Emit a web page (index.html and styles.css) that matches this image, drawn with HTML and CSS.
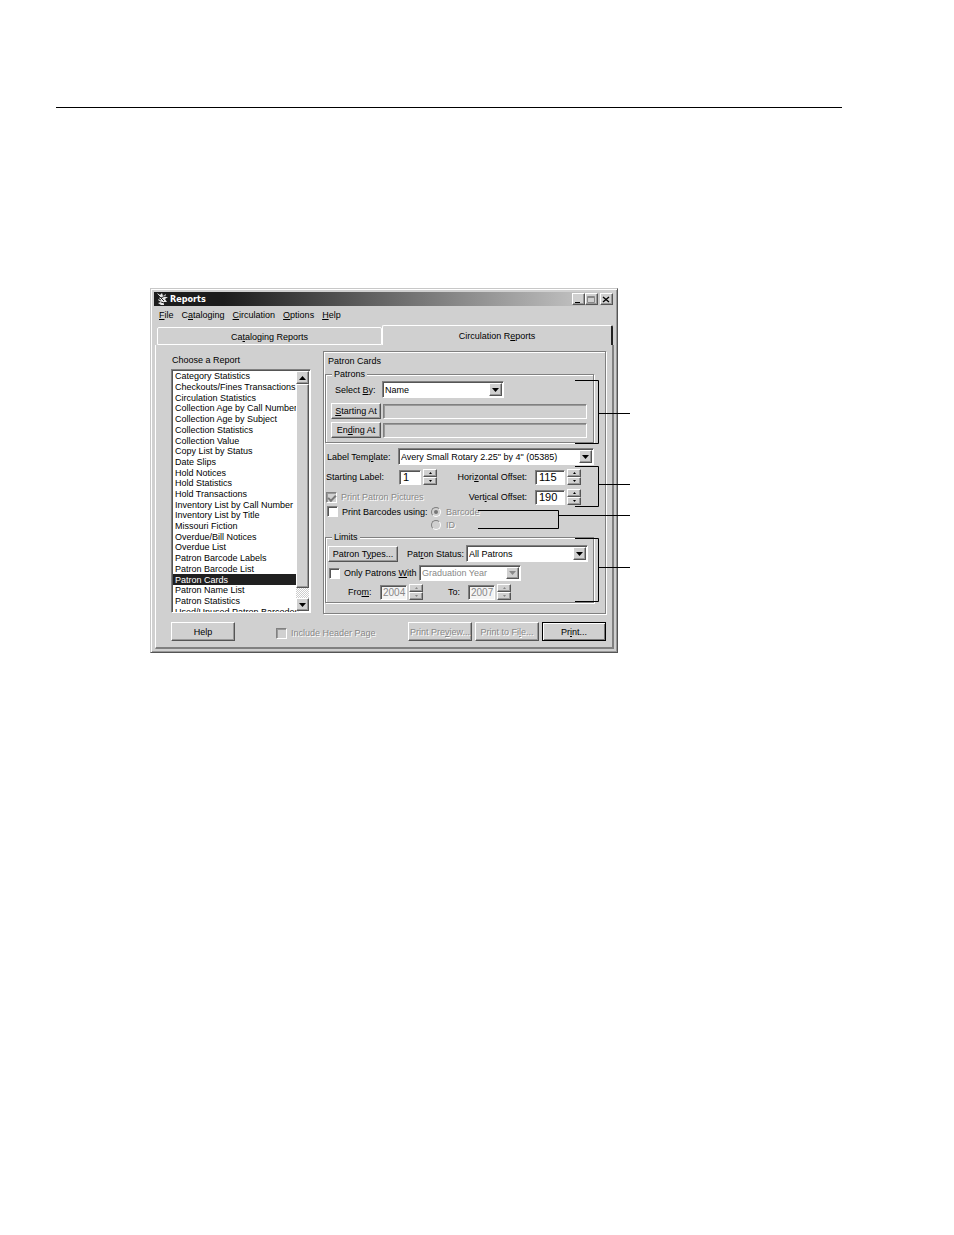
FILE: index.html
```html
<!DOCTYPE html>
<html lang="en">
<head>
<meta charset="utf-8">
<title>Reports</title>
<link rel="stylesheet" href="styles.css">
</head>
<body>
<hr class="rule">
<main class="figure">
<form class="window">
  <header class="titlebar">
    <svg class="logo" viewBox="0 0 12 14" aria-hidden="true"><path d="M1 1l3 2 2-2 1 3 3-2-1 3 3 0-3 2 2 3-3 0v3H5L2 11l3-1-3-2 2-2z" fill="#e8e8e8"/><path d="M1 2l7 7M9 4L5 6M5 10l3 1M3 7l2 1" stroke="#222" fill="none"/></svg>
    <h1 class="title">Reports</h1>
    <button type="button" class="winbtn" aria-label="Minimize"><svg viewBox="0 0 10 9"><path d="M2 7.500h5" stroke="#000"/></svg></button>
    <button type="button" class="winbtn" aria-label="Maximize" disabled><svg viewBox="0 0 10 9"><path d="M1.500 1.500h7v6h-7zM1 2.500h8" stroke="#888" fill="none"/></svg></button>
    <button type="button" class="winbtn close" aria-label="Close"><svg viewBox="0 0 10 9"><path d="M2 2l6 5M8 2L2 7" stroke="#000" stroke-width="1.300"/></svg></button>
  </header>
  <nav class="menu">
    <a href="#file"><u>F</u>ile</a><a href="#cataloging">C<u>a</u>taloging</a><a href="#circulation"><u>C</u>irculation</a><a href="#options"><u>O</u>ptions</a><a href="#help"><u>H</u>elp</a>
  </nav>
  <div class="tabs" role="tablist">
    <button type="button" class="tab" role="tab">Ca<u>t</u>aloging Reports</button>
    <button type="button" class="tab active" role="tab" aria-selected="true">Circulation R<u>e</u>ports</button>
  </div>
  <div class="page">
    <div class="columns">
      <section class="chooser">
        <h2 class="caption" id="choose">Choose a Report</h2>
        <div class="list">
          <div class="items" role="radiogroup" aria-labelledby="choose">
            <label><input type="radio" name="report">Category Statistics</label>
            <label><input type="radio" name="report">Checkouts/Fines Transactions</label>
            <label><input type="radio" name="report">Circulation Statistics</label>
            <label><input type="radio" name="report">Collection Age by Call Number</label>
            <label><input type="radio" name="report">Collection Age by Subject</label>
            <label><input type="radio" name="report">Collection Statistics</label>
            <label><input type="radio" name="report">Collection Value</label>
            <label><input type="radio" name="report">Copy List by Status</label>
            <label><input type="radio" name="report">Date Slips</label>
            <label><input type="radio" name="report">Hold Notices</label>
            <label><input type="radio" name="report">Hold Statistics</label>
            <label><input type="radio" name="report">Hold Transactions</label>
            <label><input type="radio" name="report">Inventory List by Call Number</label>
            <label><input type="radio" name="report">Inventory List by Title</label>
            <label><input type="radio" name="report">Missouri Fiction</label>
            <label><input type="radio" name="report">Overdue/Bill Notices</label>
            <label><input type="radio" name="report">Overdue List</label>
            <label><input type="radio" name="report">Patron Barcode Labels</label>
            <label><input type="radio" name="report">Patron Barcode List</label>
            <label><input type="radio" name="report" checked>Patron Cards</label>
            <label><input type="radio" name="report">Patron Name List</label>
            <label><input type="radio" name="report">Patron Statistics</label>
            <label><input type="radio" name="report">Used/Unused Patron Barcodes</label>
          </div>
          <div class="scroll">
            <button type="button" class="scrollbtn" aria-label="Scroll up"><svg viewBox="0 0 7 4"><path d="M0 4h7L3.500 0z"/></svg></button>
            <div class="thumb"></div>
            <div class="track"></div>
            <button type="button" class="scrollbtn" aria-label="Scroll down"><svg viewBox="0 0 7 4"><path d="M0 0h7L3.500 4z"/></svg></button>
          </div>
        </div>
      </section>
      <section class="panel">
        <h2 class="panel-title">Patron Cards</h2>
        <fieldset class="group">
          <legend>Patrons</legend>
          <div class="row select-by">
            <label for="by">Select <u>B</u>y:</label>
            <div class="combo medium"><select id="by"><option>Name</option></select><span class="arrow"><svg viewBox="0 0 7 4"><path d="M0 0h7L3.500 4z"/></svg></span></div>
          </div>
          <div class="row range"><button type="button" class="btn"><u>S</u>tarting At</button><input class="readout" aria-label="Starting at" readonly></div>
          <div class="row range"><button type="button" class="btn">En<u>d</u>ing At</button><input class="readout" aria-label="Ending at" readonly></div>
        </fieldset>
        <div class="row template">
          <label for="tpl">Label Tem<u>p</u>late:</label>
          <div class="combo"><select id="tpl"><option>Avery Small Rotary 2.25" by 4" (05385)</option></select><span class="arrow"><svg viewBox="0 0 7 4"><path d="M0 0h7L3.500 4z"/></svg></span></div>
        </div>
        <div class="row offsets">
          <label for="sl">Starting Label:</label>
          <input id="sl" class="num short" value="1">
          <span class="spin"><button type="button" aria-label="Up"><svg viewBox="0 0 3 2"><path d="M0 2h3L1.500 0z"/></svg></button><button type="button" aria-label="Down"><svg viewBox="0 0 3 2"><path d="M0 0h3L1.500 2z"/></svg></button></span>
          <label for="ho" class="right">Hori<u>z</u>ontal Offset:</label>
          <input id="ho" class="num" value="115">
          <span class="spin"><button type="button" aria-label="Up"><svg viewBox="0 0 3 2"><path d="M0 2h3L1.500 0z"/></svg></button><button type="button" aria-label="Down"><svg viewBox="0 0 3 2"><path d="M0 0h3L1.500 2z"/></svg></button></span>
        </div>
        <div class="row offsets second">
          <label class="check off"><input type="checkbox" checked disabled>Print Patron Pictures</label>
          <label for="vo" class="right">Vert<u>i</u>cal Offset:</label>
          <input id="vo" class="num" value="190">
          <span class="spin"><button type="button" aria-label="Up"><svg viewBox="0 0 3 2"><path d="M0 2h3L1.500 0z"/></svg></button><button type="button" aria-label="Down"><svg viewBox="0 0 3 2"><path d="M0 0h3L1.500 2z"/></svg></button></span>
        </div>
        <div class="barcodes">
          <label class="check"><input type="checkbox">Print Barcodes using:</label>
          <div class="radios">
            <label class="radio off"><input type="radio" name="code" checked disabled>Barcode</label>
            <label class="radio off"><input type="radio" name="code" disabled>ID</label>
          </div>
        </div>
        <fieldset class="group limits">
          <legend>Limits</legend>
          <div class="row status">
            <button type="button" class="btn">Patron T<u>y</u>pes...</button>
            <label for="ps">Pat<u>r</u>on Status:</label>
            <div class="combo medium"><select id="ps"><option>All Patrons</option></select><span class="arrow"><svg viewBox="0 0 7 4"><path d="M0 0h7L3.500 4z"/></svg></span></div>
          </div>
          <div class="row only">
            <label class="check"><input type="checkbox"><span>Only Patrons <u>W</u>ith</span></label>
            <div class="combo off"><select aria-label="Criterion" disabled><option>Graduation Year</option></select><span class="arrow"><svg viewBox="0 0 7 4"><path d="M0 0h7L3.500 4z"/></svg></span></div>
          </div>
          <div class="row years">
            <label for="from">Fro<u>m</u>:</label>
            <input id="from" class="num" value="2004" disabled>
            <span class="spin off"><button type="button" aria-label="Up" disabled><svg viewBox="0 0 3 2"><path d="M0 2h3L1.500 0z"/></svg></button><button type="button" aria-label="Down" disabled><svg viewBox="0 0 3 2"><path d="M0 0h3L1.500 2z"/></svg></button></span>
            <label for="to" class="to">To:</label>
            <input id="to" class="num" value="2007" disabled>
            <span class="spin off"><button type="button" aria-label="Up" disabled><svg viewBox="0 0 3 2"><path d="M0 2h3L1.500 0z"/></svg></button><button type="button" aria-label="Down" disabled><svg viewBox="0 0 3 2"><path d="M0 0h3L1.500 2z"/></svg></button></span>
          </div>
        </fieldset>
      </section>
    </div>
    <footer class="actions">
      <button type="button" class="btn">Help</button>
      <label class="check off header-check"><input type="checkbox" disabled>Include Header Page</label>
      <button type="button" class="btn" disabled>Print Pre<u>v</u>iew...</button>
      <button type="button" class="btn" disabled>Print to Fi<u>l</u>e...</button>
      <button type="button" class="btn default">Pr<u>i</u>nt...</button>
    </footer>
  </div>
</form>
<svg class="callouts" viewBox="0 0 480 365" aria-hidden="true"><path d="M425 92.500h23.500v63H425M448.500 125.500H480M425 178.500h23.500v40H425M448.500 196.500H480M328 222.500h80.500v18H328M408.500 227.500H480M425 250.500h23.500v63H425M448.500 279.500H480" fill="none" stroke="#000"/></svg>
</main>
</body>
</html>
```
FILE: styles.css
```css
* { box-sizing: border-box; }
body {
  margin: 0;
  background: #fff;
  color: #000;
  font: 9px/12px "Liberation Sans", Arial, sans-serif;
}
button, input, select { font: inherit; color: inherit; margin: 0; padding: 0; border-radius: 0; }
button svg, .arrow svg { display: block; }
h1, h2 { margin: 0; font-size: inherit; font-weight: normal; }
label, legend, h2, button { white-space: nowrap; }
u { text-underline-offset: 1px; text-decoration-thickness: 1px; }

.rule { margin: 107px 112px 0 56px; border: 0; border-top: 1px solid #000; }
.figure { position: relative; margin: 180px 0 0 150px; max-width: 468px; }
.callouts { position: absolute; left: 0; top: 0; width: 480px; height: 365px; pointer-events: none; }

.window {
  padding: 3px;
  background: #d0d0d0;
  border: 1px solid #c8c8c8;
  border-right-color: #555;
  border-bottom-color: #555;
  box-shadow: inset 1px 1px #fff, inset -1px -1px #999;
}
.titlebar {
  display: flex;
  align-items: center;
  height: 14px;
  padding: 0 1px 0 2px;
  background: linear-gradient(to right, #1c1c1c 15%, #d0d0d0);
}
.logo { width: 12px; height: 14px; }
.title { flex: 1; padding-left: 2px; color: #fff; font: bold 9px/14px "DejaVu Sans Condensed", "DejaVu Sans", sans-serif; }
.winbtn, .scrollbtn, .spin button, .arrow, .btn {
  background: #d0d0d0;
  border: 1px solid;
  border-color: #fff #555 #555 #fff;
}
.winbtn { width: 13px; height: 12px; box-shadow: inset -1px -1px #999; }
.winbtn svg { width: 10px; height: 9px; }
.close { margin-left: 2px; }

.menu { display: flex; gap: 8px; height: 19px; padding: 3px 5px; }
.menu a { color: #000; text-decoration: none; }

.tabs { display: flex; align-items: flex-end; height: 20px; padding: 0 1px 0 3px; }
.tab {
  flex: 225;
  height: 18px;
  padding-top: 1px;
  background: #d0d0d0;
  border: 1px solid #fff;
  border-radius: 2px 2px 0 0;
}
.tab.active { flex: 230; height: 20px; border-bottom: 0; border-right: 2px solid #222; }

.page {
  margin: 0 0 0 1px;
  padding: 6px 6px 6px 15px;
  border-left: 1px solid #fff;
  border-right: 2px solid #808080;
  border-bottom: 2px solid #808080;
}
.columns { display: grid; grid-template-columns: 140px minmax(0, 1fr); gap: 12px; }
.caption { padding: 3px 0 3px 1px; }
.list {
  display: flex;
  height: 244px;
  background: #fff;
  border: 1px solid;
  border-color: #808080 #fff #fff #808080;
  box-shadow: inset 1px 1px #555;
  padding: 1px;
  overflow: hidden;
}
.items { flex: 1; display: grid; grid-auto-rows: 1fr; height: 246px; min-width: 0; }
.items label { display: flex; align-items: center; padding-left: 2px; line-height: 10px; min-height: 0; min-width: 0; }
.items input { appearance: none; width: 0; height: 0; }
.items label:has(:checked) { background: #202020; color: #fff; }
.scroll { display: flex; flex-direction: column; width: 13px; flex: none; }
.scrollbtn { height: 13px; display: grid; place-items: center; box-shadow: inset -1px -1px #999; }
.scrollbtn svg, .arrow svg { width: 7px; height: 4px; }
.thumb { flex: 1; background: #d0d0d0; border: 1px solid; border-color: #fff #555 #555 #fff; box-shadow: inset -1px -1px #999; }
.track { height: 10px; background: repeating-conic-gradient(#ccc 0 25%, #fff 0 50%) 0 0 / 2px 2px; }

.panel {
  border: 1px solid #808080;
  box-shadow: inset 1px 1px #fff, 1px 1px #fff;
  padding-bottom: 9px;
}
.panel-title { padding: 3px 4px 1px; }
.group {
  margin: 0 11px 1px 1px;
  padding: 1px 6px 4px 5px;
  border: 1px solid #808080;
  box-shadow: inset 1px 1px #fff, 1px 1px #fff;
  min-width: 0;
}
.group legend { margin-left: 1px; padding: 0 2px; background: #d0d0d0; }
.row { display: flex; align-items: center; }
.select-by label { width: 51px; padding-left: 4px; }
.select-by { height: 17px; margin-bottom: 5px; }
.range { height: 16px; gap: 2px; }
.range + .range { margin-top: 3px; }
.range .btn { width: 50px; height: 16px; }
.readout { flex: 1; min-width: 0; height: 15px; background: #d0d0d0; border: 1px solid; border-color: #808080 #fff #fff #808080; box-shadow: inset 1px 1px #999; }

.combo {
  display: flex;
  flex: 1;
  height: 17px;
  background: #fff;
  border: 1px solid;
  border-color: #808080 #fff #fff #808080;
  box-shadow: inset 1px 1px #555;
  padding: 1px;
}
.combo.medium { flex: none; width: 122px; }
.combo select { appearance: none; flex: 1; min-width: 0; border: 0; background: transparent; padding-left: 1px; opacity: 1; }
.arrow { width: 13px; display: grid; place-items: center; box-shadow: inset -1px -1px #999; }
.combo.off { color: #888; }
.off svg { fill: #888; }

.template { margin: 5px 11px 0 3px; }
.template label { width: 71px; }
.num {
  width: 30px;
  height: 15px;
  padding-left: 3px;
  background: #fff;
  border: 1px solid;
  border-color: #808080 #fff #fff #808080;
  box-shadow: inset 1px 1px #555;
  font-size: 11px;
}
.num.short { width: 22px; }
.num:disabled { background: #f4f4f4; color: #888; }
.spin { display: flex; flex-direction: column; width: 14px; height: 16px; margin-left: 2px; }
.spin button { flex: 1; display: grid; place-items: center; box-shadow: inset -1px -1px #999; }
.spin svg { width: 3px; height: 2px; }
.offsets { height: 16px; margin: 4px 24px 0 2px; }
.offsets > label:first-child { width: 73px; }
.offsets .right { margin-left: auto; padding-right: 8px; }
.offsets.second { margin-top: 4px; }

.check, .radio { display: flex; align-items: center; gap: 4px; }
.check input, .radio input { appearance: none; flex: none; width: 11px; height: 11px; background: #fff; border: 1px solid; border-color: #808080 #fff #fff #808080; box-shadow: inset 1px 1px #555; display: grid; place-items: center; }
.check input:disabled { background: #d0d0d0; box-shadow: inset 1px 1px #999; }
.check input:checked::before { content: ""; width: 6px; height: 3px; border: solid #777; border-width: 0 0 2px 2px; transform: rotate(-45deg); }
.radio { gap: 5px; height: 13px; }
.radio input { width: 10px; height: 10px; border-radius: 50%; background: #d0d0d0; box-shadow: none; }
.radio input:checked::before { content: ""; width: 4px; height: 4px; border-radius: 50%; background: #777; }
label.off, .btn:disabled { color: #888; text-shadow: 1px 1px #fff; }
.barcodes { display: flex; align-items: flex-start; padding-left: 3px; }
.barcodes > .check { width: 104px; height: 13px; }

.limits { padding: 2px 5px 2px 2px; }
.limits legend { margin-left: 4px; }
.status .btn { width: 70px; height: 16px; }
.status label { width: 68px; padding-left: 9px; }
.only { margin-top: 3px; padding-left: 1px; }
.only .check { width: 90px; }
.only .combo { flex: none; width: 102px; height: 16px; }
.years { margin-top: 3px; padding-left: 20px; height: 16px; }
.years label { width: 32px; }
.years .num { width: 27px; padding-left: 2px; font-size: 10px; }
.years .to { width: 20px; margin-left: 25px; }

.actions { display: flex; align-items: center; gap: 3px; margin-top: 8px; }
.actions .btn { width: 64px; height: 19px; }
.actions .header-check { margin: 3px auto 0 38px; }
.btn { box-shadow: inset -1px -1px #999; text-align: center; }
.actions .default { border-color: #000; box-shadow: inset 1px 1px #fff, inset -1px -1px #777; }
```
